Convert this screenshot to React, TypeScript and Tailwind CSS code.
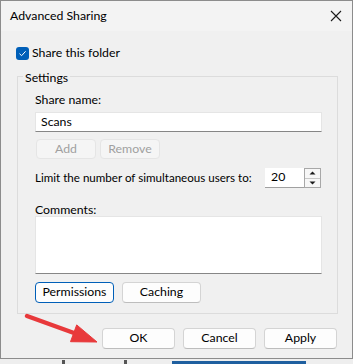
import React from "react";

const font = { fontFamily: 'Lato, "Noto Sans", sans-serif' };

function Btn({
  children,
  w,
  h = "h-[21px]",
  disabled,
  focused,
}: {
  children: React.ReactNode;
  w: string;
  h?: string;
  disabled?: boolean;
  focused?: boolean;
}) {
  const base = `${w} ${h} flex items-center justify-center rounded-[4px] text-[12.3px] leading-none`;
  if (disabled)
    return (
      <div className={`${base} bg-[#f5f5f5] border border-[#e5e5e5] text-[#a0a0a0]`}>{children}</div>
    );
  if (focused)
    return (
      <div className={`${base} bg-[#fdfdfd] border border-[#005fb8] text-black`}>{children}</div>
    );
  return (
    <div className={`${base} bg-[#fdfdfd] border border-[#d4d4d4] border-b-[#bdbdbd] text-black`}>
      {children}
    </div>
  );
}

export default function App() {
  return (
    <div className="relative w-[353px] h-[364px] bg-[#eeeeee] overflow-hidden" style={font}>
      <div className="w-[353px] h-[359px] border border-[#8c8c8c] bg-[#f0f0f0] flex flex-col">
        {/* title bar */}
        <div className="h-[30px] bg-[#f3f3f3] flex items-center justify-between pl-[9px] pr-[9px]">
          <span className="text-[12.3px] text-black leading-none">Advanced Sharing</span>
          <svg width="12" height="12" viewBox="0 0 12 12" className="mr-[1px]">
            <path d="M1 1 L11 11 M11 1 L1 11" stroke="#1b1b1b" strokeWidth="1.1" fill="none" />
          </svg>
        </div>

        {/* body */}
        <div className="flex flex-col pl-[15px] pr-[15px]">
          <div className="mt-[15px] flex items-center gap-[3px] h-[14px]">
            <div className="w-[13px] h-[13px] rounded-[3px] bg-[#005fb8] flex items-center justify-center">
              <svg width="9" height="9" viewBox="0 0 9 9">
                <path d="M1.5 4.7 L3.6 6.7 L7.6 2.3" stroke="#ffffff" strokeWidth="1" fill="none" />
              </svg>
            </div>
            <span className="text-[12.3px] text-black leading-none">Share this folder</span>
          </div>

          <fieldset className="mt-[8px] ml-[1px] w-[321px] h-[246px] border border-[#dcdcdc] pl-[17px] pr-[15px] pb-0 flex flex-col">
            <legend className="ml-[-12px] px-[2px] text-[12.3px] leading-[16px] text-black">
              <span className="relative top-[2px]">Settings</span>
            </legend>
            <div className="mt-[8px] text-[12.3px] leading-[16px] text-black">Share name:</div>
            <div className="mt-[4px] h-[20px] bg-white border border-[#e5e5e5] border-b-[#868686] flex items-center pl-[5px] text-[12.3px] text-black">
              Scans
            </div>
            <div className="mt-[7px] flex gap-[4px] ml-[1px]">
              <Btn w="w-[60px]" h="h-[20px]" disabled>
                Add
              </Btn>
              <Btn w="w-[60px]" h="h-[20px]" disabled>
                Remove
              </Btn>
            </div>
            <div className="mt-[9px] flex items-center justify-between h-[20px]">
              <span className="text-[11.6px] leading-none text-black whitespace-nowrap">
                Limit the number of simultaneous users to:
              </span>
              <div className="flex h-[20px] w-[56px] mr-[1px]">
                <div className="flex-1 bg-white border-b border-[#a0a0a0] flex items-center pl-[6px] text-[12.3px] text-black">
                  20
                </div>
                <div className="w-[17px] border border-[#a8a8a8] bg-[#f7f7f7] flex flex-col">
                  <div className="flex-1 flex items-center justify-center border-b border-[#c8c8c8]">
                    <svg width="7" height="4" viewBox="0 0 7 4">
                      <path d="M0.5 3.5 L3.5 0.5 L6.5 3.5 Z" fill="#1b1b1b" />
                    </svg>
                  </div>
                  <div className="flex-1 flex items-center justify-center">
                    <svg width="7" height="4" viewBox="0 0 7 4">
                      <path d="M0.5 0.5 L3.5 3.5 L6.5 0.5 Z" fill="#1b1b1b" />
                    </svg>
                  </div>
                </div>
              </div>
            </div>
            <div className="mt-[14px] text-[12.3px] leading-[16px] text-black">Comments:</div>
            <div className="mt-[-2px] h-[58px] bg-white border border-[#e5e5e5] border-b-[#868686]" />
            <div className="mt-[8px] flex gap-[8px]">
              <Btn w="w-[79px]" focused>
                Permissions
              </Btn>
              <Btn w="w-[79px]">Caching</Btn>
            </div>
          </fieldset>

          <div className="mt-[14px] flex justify-end gap-[8px] pr-[0px]">
            <Btn w="w-[73px]">OK</Btn>
            <Btn w="w-[73px]">Cancel</Btn>
            <Btn w="w-[73px]">Apply</Btn>
          </div>
        </div>
      </div>

      {/* desktop bits below window */}
      <div className="absolute left-[62px] top-[360px] w-[3px] h-[4px] bg-[#555555]" />
      <div className="absolute left-[124px] top-[360px] w-[3px] h-[4px] bg-[#555555]" />
      <div className="absolute left-[172px] top-[361px] w-[134px] h-[3px] bg-[#1f5f9f]" />

      {/* red annotation arrow */}
      <svg className="absolute left-0 top-0 pointer-events-none" width="353" height="364" viewBox="0 0 353 364">
        <path d="M27 316 L74 333" stroke="#e8393b" strokeWidth="4.5" strokeLinecap="round" fill="none" />
        <path d="M97 342 L70.5 341.7 L76.7 324.9 Z" fill="#e8393b" stroke="#e8393b" strokeWidth="1" strokeLinejoin="round" />
      </svg>
    </div>
  );
}
